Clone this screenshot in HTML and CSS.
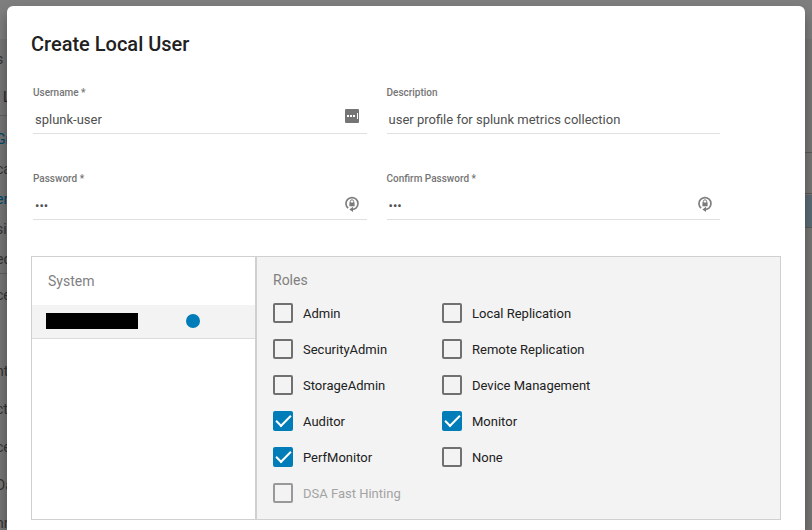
FILE: index.html
```html
<!DOCTYPE html>
<html lang="en">
<head>
<meta charset="utf-8">
<meta name="viewport" content="width=device-width, initial-scale=1">
<title>Create Local User</title>
<link rel="stylesheet" href="styles.css">
</head>
<body>
<div class="page" aria-hidden="true">
  <div class="page-bar"></div>
  <div class="page-body">
    <div class="nav">
      <div class="nav-head"><span>s</span><span class="nav-title">L</span></div>
      <div class="nav-group">
        <span class="nav-link">Gr</span><span>ca</span><span class="nav-link">er</span><span>si</span><span>ed</span>
      </div>
      <div class="nav-list">
        <span>ce</span><span></span><span>nt</span><span>cti</span><span>ce</span><span>Da</span><span>nr</span>
      </div>
    </div>
    <div class="page-table">
      <div class="table-head"></div>
      <div class="table-row"></div>
    </div>
  </div>
</div>

<main class="dialog" role="dialog" aria-labelledby="dialog-title">
  <h1 id="dialog-title" class="dialog-title">Create Local User</h1>
  <form class="form">
    <div class="fields">
      <div class="field">
        <label class="field-label" for="username">Username *</label>
        <div class="control">
          <input class="input" id="username" type="text" value="splunk-user">
          <svg class="manager-icon" viewBox="0 0 14 14" aria-hidden="true">
            <rect width="14" height="14" rx="1" fill="#757575"/>
            <path d="M2 6h2v2H2zM5 6h2v2H5zM8 6h2v2H8zM12 4h1v6h-1z" fill="#fff"/>
          </svg>
        </div>
      </div>
      <div class="field">
        <label class="field-label" for="description">Description</label>
        <div class="control">
          <input class="input" id="description" type="text" value="user profile for splunk metrics collection">
        </div>
      </div>
      <div class="field">
        <label class="field-label" for="password">Password *</label>
        <div class="control">
          <input class="input" id="password" type="password" value="abc">
          <svg class="lock-icon" viewBox="0 0 14 16" aria-hidden="true">
            <path d="M3.2 12.2A6 6 0 1 1 11.200 11.800Q9.600 13.200 7 13.600" fill="none" stroke="#808080" stroke-width="1.700"/>
            <path d="M8 10.800v5.200L4.400 13.600z" fill="#7b7b7b"/>
            <path d="M5.300 7V5.500a1.700 1.700 0 0 1 3.400 0V7" fill="none" stroke="#7b7b7b"/>
            <rect x="4.400" y="6.500" width="5.200" height="3.800" fill="#7b7b7b"/>
          </svg>
        </div>
      </div>
      <div class="field">
        <label class="field-label" for="confirm">Confirm Password *</label>
        <div class="control">
          <input class="input" id="confirm" type="password" value="abc">
          <svg class="lock-icon" viewBox="0 0 14 16" aria-hidden="true">
            <path d="M3.2 12.2A6 6 0 1 1 11.200 11.800Q9.600 13.200 7 13.600" fill="none" stroke="#808080" stroke-width="1.700"/>
            <path d="M8 10.800v5.200L4.400 13.600z" fill="#7b7b7b"/>
            <path d="M5.300 7V5.500a1.700 1.700 0 0 1 3.400 0V7" fill="none" stroke="#7b7b7b"/>
            <rect x="4.400" y="6.500" width="5.200" height="3.800" fill="#7b7b7b"/>
          </svg>
        </div>
      </div>
    </div>

    <div class="panels">
      <section class="systems">
        <h2 class="panel-title">System</h2>
        <div class="system-row"><span class="system-name"></span><span class="system-dot"></span></div>
      </section>
      <section class="roles">
        <h2 class="panel-title">Roles</h2>
        <div class="role-grid">
          <div class="role-column">
            <label class="role"><input class="check" type="checkbox">Admin</label>
            <label class="role"><input class="check" type="checkbox">SecurityAdmin</label>
            <label class="role"><input class="check" type="checkbox">StorageAdmin</label>
            <label class="role"><input class="check" type="checkbox" checked>Auditor</label>
            <label class="role"><input class="check" type="checkbox" checked>PerfMonitor</label>
            <label class="role role-disabled"><input class="check" type="checkbox" disabled>DSA Fast Hinting</label>
          </div>
          <div class="role-column">
            <label class="role"><input class="check" type="checkbox">Local Replication</label>
            <label class="role"><input class="check" type="checkbox">Remote Replication</label>
            <label class="role"><input class="check" type="checkbox">Device Management</label>
            <label class="role"><input class="check" type="checkbox" checked>Monitor</label>
            <label class="role"><input class="check" type="checkbox">None</label>
          </div>
        </div>
      </section>
    </div>
  </form>
</main>
</body>
</html>
```
FILE: styles.css
```css
* { box-sizing: border-box; }

body {
  margin: 0;
  min-height: 100vh;
  display: flex;
  flex-direction: column;
  padding: 6px 7px 0;
  background: #7d7d7d;
  font-family: Roboto, "Liberation Sans", sans-serif;
  overflow: hidden;
}

h1, h2 { margin: 0; }

/* Dimmed page behind the dialog */
.page {
  position: absolute;
  inset: 0;
  display: flex;
  flex-direction: column;
  overflow: hidden;
  color: #333;
  font-size: 14px;
}
.page-bar { height: 39px; flex: none; background: #7e7e7e; }
.page-body { flex: 1; display: flex; justify-content: space-between; background: #797876; }
.nav { width: 40px; background: #767676; }
.nav span { display: block; margin-left: -4px; white-space: nowrap; }
.nav-head { height: 77px; border-bottom: 1px solid #626262; line-height: 40px; }
.nav .nav-title { margin-left: 3px; color: #252525; line-height: 36px; }
.nav-group { height: 158px; border-bottom: 1px solid #606060; padding-top: 8px; line-height: 30px; }
.nav .nav-link { color: #00456a; }
.nav-list { padding-top: 2px; line-height: 38px; }
.nav-list span { min-height: 38px; }
.page-table { width: 40px; padding-top: 113px; }
.table-head { height: 42px; border: solid #5d5c5a; border-width: 1px 0; }
.table-row { height: 33px; margin-top: 1px; background: #5c6d74; border-bottom: 1px solid #5d5c5a; }

.dialog {
  position: relative;
  flex: 1;
  padding: 26px 24px 10px;
  border-radius: 6px 6px 0 0;
  background: #fff;
  box-shadow: 0 8px 14px rgba(0, 0, 0, .35);
}
.dialog-title {
  color: #212121;
  font-size: 20px;
  font-weight: 500;
  line-height: 24px;
}

.fields {
  display: grid;
  grid-template-columns: 1fr 1fr;
  gap: 36px 20px;
  margin: 28px 61px 36px 2px;
}
.field-label {
  display: block;
  color: #757575;
  font-size: 10px;
  font-weight: 500;
  line-height: 18px;
}
.control {
  display: flex;
  align-items: center;
  height: 32px;
  padding: 4px 8px 0 2px;
  border-bottom: 1px solid #e0e0e0;
}
.input {
  flex: 1;
  min-width: 0;
  padding: 0;
  border: 0;
  outline: 0;
  background: none;
  color: #505050;
  font: 13px/20px Roboto, "Liberation Sans", sans-serif;
}
.manager-icon { width: 14px; height: 14px; margin-bottom: 8px; }
.lock-icon { width: 14px; height: 16px; margin-bottom: 4px; }

.panels {
  display: grid;
  grid-template-columns: 223px 1fr;
  min-height: 264px;
  border: 1px solid #d0d0d0;
}
.systems { padding-top: 14px; }
.panel-title {
  color: #808080;
  font-size: 14px;
  font-weight: 400;
  line-height: 20px;
}
.systems .panel-title { margin: 0 16px 14px; }
.system-row {
  display: flex;
  align-items: center;
  gap: 48px;
  height: 34px;
  padding: 0 14px 1px;
  border-bottom: 1px solid #dcdcdc;
  background: #f3f3f3;
}
.system-name { width: 92px; height: 16px; background: #000; }
.system-dot { width: 14px; height: 14px; border-radius: 50%; background: #007db8; }

.roles {
  padding: 13px 16px;
  border-left: 2px solid #d0d0d0;
  background: #f3f3f3;
}
.role-grid { display: flex; gap: 40px; margin-top: 13px; }
.role-column { display: flex; flex-direction: column; gap: 15px; }
.role {
  display: flex;
  align-items: flex-start;
  gap: 10px;
  min-width: 129px;
  color: #212121;
  font-size: 13px;
  line-height: 21px;
}
.check {
  appearance: none;
  display: grid;
  place-items: center;
  width: 20px;
  height: 20px;
  margin: 0;
  border: 2px solid #707070;
  border-radius: 2px;
}
.check:checked { border-color: #007db8; background: #007db8; }
.check:checked::after {
  content: "";
  width: 13px;
  height: 6px;
  margin-bottom: 4px;
  border: solid #fff;
  border-width: 0 0 2px 2px;
  transform: rotate(-45deg);
}
.role-disabled { color: #a3a3a3; }
.role-disabled .check { border-color: #999; }
```
